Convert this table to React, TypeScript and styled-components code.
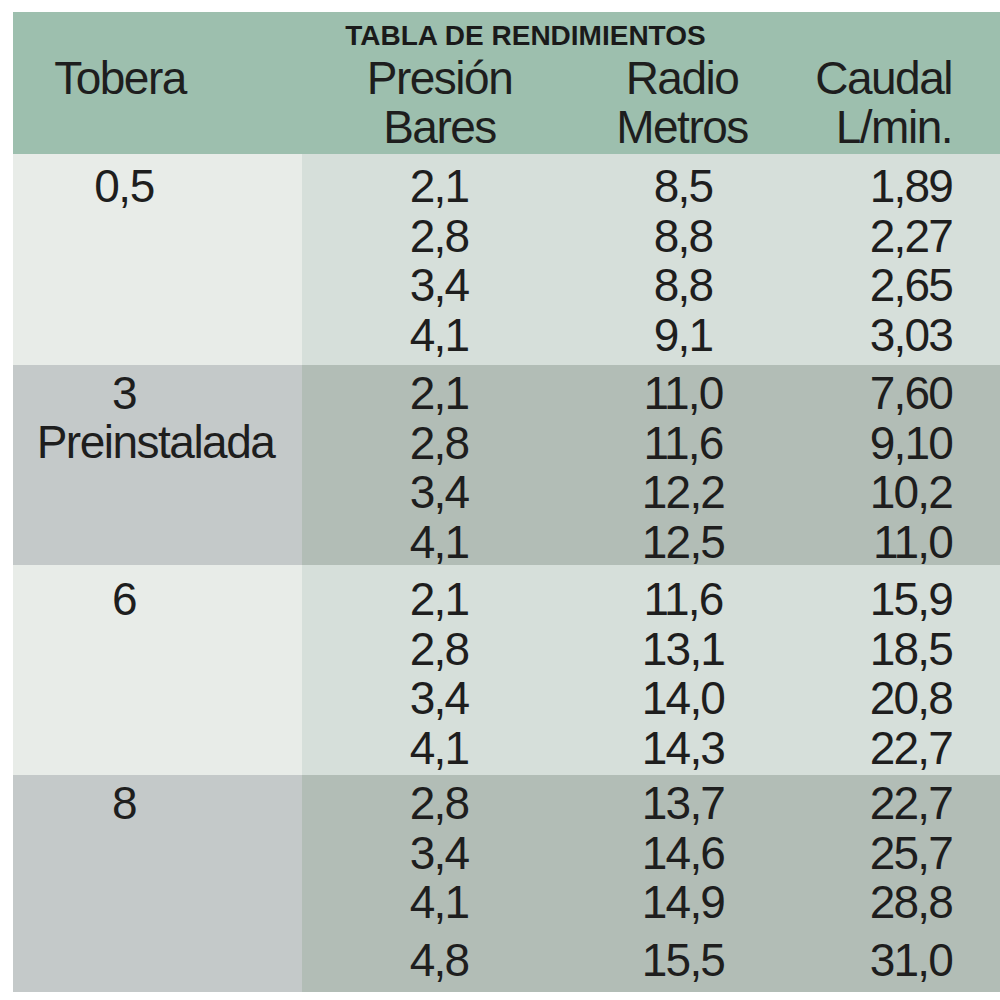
import React from "react";
import styled, { createGlobalStyle } from "styled-components";

const Global = createGlobalStyle`
  html, body { margin: 0; padding: 0; background: #ffffff; }
  body { font-family: "Liberation Sans", Arial, sans-serif; color: #1e1e1e; }
`;

const Page = styled.div`
  width: 1000px;
  height: 1000px;
  padding: 12px 0 0 13px;
  box-sizing: border-box;
  background: #ffffff;
`;

const Table = styled.div`
  width: 987px;
  display: flex;
  flex-direction: column;
`;

const Header = styled.div`
  height: 142px;
  box-sizing: border-box;
  padding-top: 10px;
  background: #9dbfae;
  display: grid;
  grid-template-columns: 289px 278px 210px 1fr;
  grid-template-rows: 28px auto;
  row-gap: 4px;
`;

const Title = styled.div`
  grid-column: 1 / -1;
  font-size: 28px;
  line-height: 28px;
  font-weight: 700;
  letter-spacing: 0px;
  text-align: center;
  padding-left: 38px;
  color: #1a1a1a;
`;

const HeadCell = styled.div<{ $align: "center" | "right"; $pl?: number; $pr?: number }>`
  font-size: 46px;
  line-height: 49px;
  letter-spacing: -1.5px;
  text-align: ${(p) => p.$align};
  padding-left: ${(p) => p.$pl ?? 0}px;
  padding-right: ${(p) => p.$pr ?? 0}px;
  white-space: nowrap;
`;

const Band = styled.div<{ $h: number }>`
  display: grid;
  grid-template-columns: 289px 1fr;
  height: ${(p) => p.$h}px;
`;

const LabelCell = styled.div<{ $dark: boolean; $pt: number }>`
  background: ${(p) => (p.$dark ? "#c4c9c9" : "#e8ece8")};
  padding-top: ${(p) => p.$pt}px;
  display: flex;
  flex-direction: column;
`;

const Label = styled.div<{ $shift: boolean }>`
  font-size: 46px;
  line-height: 49px;
  letter-spacing: -1.5px;
  text-align: center;
  padding-right: ${(p) => (p.$shift ? 67 : 4)}px;
  white-space: nowrap;
`;

const ValuesCell = styled.div<{ $dark: boolean; $pt: number }>`
  background: ${(p) => (p.$dark ? "#b2bdb6" : "#d6dfda")};
  padding-top: ${(p) => p.$pt}px;
  display: flex;
  flex-direction: column;
`;

const ValueRow = styled.div<{ $extra?: number }>`
  display: grid;
  grid-template-columns: 278px 210px 1fr;
  margin-top: ${(p) => p.$extra ?? 0}px;
`;

const Num = styled.div<{ $align: "center" | "right"; $pl?: number; $pr?: number }>`
  font-size: 46px;
  line-height: 49.5px;
  letter-spacing: -1.8px;
  text-align: ${(p) => p.$align};
  padding-left: ${(p) => p.$pl ?? 0}px;
  padding-right: ${(p) => p.$pr ?? 0}px;
  white-space: nowrap;
`;

type Group = {
  labels: string[];
  rows: [string, string, string][];
  dark: boolean;
  h: number;
  pt: number;
  lastExtra?: number;
};

const groups: Group[] = [
  {
    labels: ["0,5"],
    rows: [
      ["2,1", "8,5", "1,89"],
      ["2,8", "8,8", "2,27"],
      ["3,4", "8,8", "2,65"],
      ["4,1", "9,1", "3,03"],
    ],
    dark: false,
    h: 211,
    pt: 8,
  },
  {
    labels: ["3", "Preinstalada"],
    rows: [
      ["2,1", "11,0", "7,60"],
      ["2,8", "11,6", "9,10"],
      ["3,4", "12,2", "10,2"],
      ["4,1", "12,5", "11,0"],
    ],
    dark: true,
    h: 200,
    pt: 4,
  },
  {
    labels: ["6"],
    rows: [
      ["2,1", "11,6", "15,9"],
      ["2,8", "13,1", "18,5"],
      ["3,4", "14,0", "20,8"],
      ["4,1", "14,3", "22,7"],
    ],
    dark: false,
    h: 210,
    pt: 10,
  },
  {
    labels: ["8"],
    rows: [
      ["2,8", "13,7", "22,7"],
      ["3,4", "14,6", "25,7"],
      ["4,1", "14,9", "28,8"],
      ["4,8", "15,5", "31,0"],
    ],
    dark: true,
    h: 217,
    pt: 4,
    lastExtra: 8,
  },
];

export default function App() {
  return (
    <Page>
      <Global />
      <Table>
        <Header>
          <Title>TABLA DE RENDIMIENTOS</Title>
          <HeadCell $align="center" $pr={75}>Tobera</HeadCell>
          <HeadCell $align="center" $pr={3}>
            Presión
            <br />
            Bares
          </HeadCell>
          <HeadCell $align="center" $pr={6}>
            Radio
            <br />
            Metros
          </HeadCell>
          <HeadCell $align="right" $pr={48}>
            Caudal
            <br />
            L/min.
          </HeadCell>
        </Header>
        {groups.map((g, gi) => (
          <Band key={gi} $h={g.h}>
            <LabelCell $dark={g.dark} $pt={g.pt}>
              {g.labels.map((l, li) => (
                <Label key={li} $shift={l.length < 4}>
                  {l}
                </Label>
              ))}
            </LabelCell>
            <ValuesCell $dark={g.dark} $pt={g.pt}>
              {g.rows.map((r, ri) => (
                <ValueRow key={ri} $extra={ri === 3 ? g.lastExtra : 0}>
                  <Num $align="center" $pr={4}>{r[0]}</Num>
                  <Num $align="center" $pr={4}>{r[1]}</Num>
                  <Num $align="right" $pr={48}>{r[2]}</Num>
                </ValueRow>
              ))}
            </ValuesCell>
          </Band>
        ))}
      </Table>
    </Page>
  );
}
